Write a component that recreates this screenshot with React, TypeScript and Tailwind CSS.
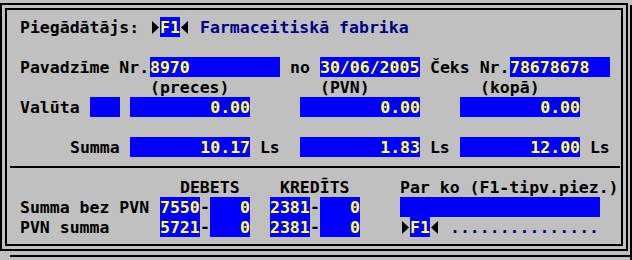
const field = "inline-block h-[20px] bg-[#0000fc] text-[#ffff55]";

function Tri({ dir }: { dir: "right" | "left" }) {
  return (
    <svg width="10" height="20" viewBox="0 0 10 20" className="block">
      {dir === "right" ? (
        <polygon points="2,4 9,10.5 2,17" fill="#000" />
      ) : (
        <polygon points="8,4 1,10.5 8,17" fill="#000" />
      )}
    </svg>
  );
}

function Dash() {
  return <span className="mt-[5px] inline-block h-[10px] w-[10px] leading-[10px]">-</span>;
}

export default function App() {
  return (
    <div className="relative h-[260px] w-[632px] overflow-hidden bg-[#c0c0c0] font-['DejaVu_Sans_Mono',monospace] text-[16.5px] leading-[22px] font-bold text-black">
      <div className="mt-[3px] h-[248px] w-[628px] border-2 border-black p-[3px]">
        <div className="h-full whitespace-pre border-2 border-black pt-[7px] pl-[13px]">
          {/* Piegādātājs */}
          <div className="flex h-[20px]">
            <span className="w-[130px]">Piegādātājs:</span>
            <Tri dir="right" />
            <span className={`${field} w-[20px]`}>F1</span>
            <Tri dir="left" />
            <span className="ml-[10px] text-[#000080]">Farmaceitiskā fabrika</span>
          </div>
          <div className="h-[20px]" />

          {/* Pavadzīme */}
          <div className="flex h-[20px]">
            <span className="w-[130px]">Pavadzīme Nr.</span>
            <span className={`${field} w-[130px]`}>8970</span>
            <span className="ml-[10px] w-[20px]">no</span>
            <span className={`${field} ml-[10px] w-[100px]`}>30/06/2005</span>
            <span className="ml-[10px] w-[80px]">Čeks Nr.</span>
            <span className={`${field} w-[100px]`}>78678678</span>
          </div>
          <div className="flex h-[20px]">
            <span className="ml-[130px] w-[80px]">(preces)</span>
            <span className="ml-[90px] w-[50px]">(PVN)</span>
            <span className="ml-[110px]">(kopā)</span>
          </div>

          {/* Valūta */}
          <div className="flex h-[20px]">
            <span className="w-[60px]">Valūta</span>
            <span className={`${field} ml-[10px] w-[30px]`} />
            <span className={`${field} ml-[10px] w-[120px] text-right`}>0.00</span>
            <span className={`${field} ml-[50px] w-[120px] text-right`}>0.00</span>
            <span className={`${field} ml-[40px] w-[120px] text-right`}>0.00</span>
          </div>
          <div className="h-[20px]" />

          {/* Summa */}
          <div className="flex h-[20px]">
            <span className="ml-[50px] w-[50px]">Summa</span>
            <span className={`${field} ml-[10px] w-[120px] text-right`}>10.17</span>
            <span className="w-[30px]"> Ls</span>
            <span className={`${field} ml-[20px] w-[120px] text-right`}>1.83</span>
            <span className="w-[30px]"> Ls</span>
            <span className={`${field} ml-[10px] w-[120px] text-right`}>12.00</span>
            <span className="w-[30px]"> Ls</span>
          </div>

          {/* divider */}
          <div className="-ml-[10px] h-[20px] pt-[9px]">
            <div className="h-[2px] w-[610px] bg-black" />
          </div>

          {/* Debets / Kredīts */}
          <div className="flex h-[20px]">
            <span className="ml-[160px] w-[60px]">DEBETS</span>
            <span className="ml-[40px] w-[70px]">KREDĪTS</span>
            <span className="ml-[50px]">Par ko (F1-tipv.piez.)</span>
          </div>
          <div className="flex h-[20px]">
            <span className="w-[130px]">Summa bez PVN</span>
            <span className={`${field} ml-[10px] w-[40px]`}>7550</span>
            <Dash />
            <span className={`${field} w-[40px] text-right`}>0</span>
            <span className={`${field} ml-[20px] w-[40px]`}>2381</span>
            <Dash />
            <span className={`${field} w-[40px] text-right`}>0</span>
            <span className={`${field} ml-[40px] w-[200px]`} />
          </div>
          <div className="flex h-[20px]">
            <span className="w-[90px]">PVN summa</span>
            <span className={`${field} ml-[50px] w-[40px]`}>5721</span>
            <Dash />
            <span className={`${field} w-[40px] text-right`}>0</span>
            <span className={`${field} ml-[20px] w-[40px]`}>2381</span>
            <Dash />
            <span className={`${field} w-[40px] text-right`}>0</span>
            <span className="ml-[40px]">
              <Tri dir="right" />
            </span>
            <span className={`${field} w-[20px]`}>F1</span>
            <Tri dir="left" />
            <span className="ml-[10px] text-[#000080]">...............</span>
          </div>
        </div>
      </div>

      {/* edges of the windows behind */}
      <div className="absolute top-[5px] right-0 h-[255px] w-[2px] bg-black" />
      <div className="absolute top-[255px] left-[10px] h-[2px] w-[622px] bg-black" />
    </div>
  );
}
